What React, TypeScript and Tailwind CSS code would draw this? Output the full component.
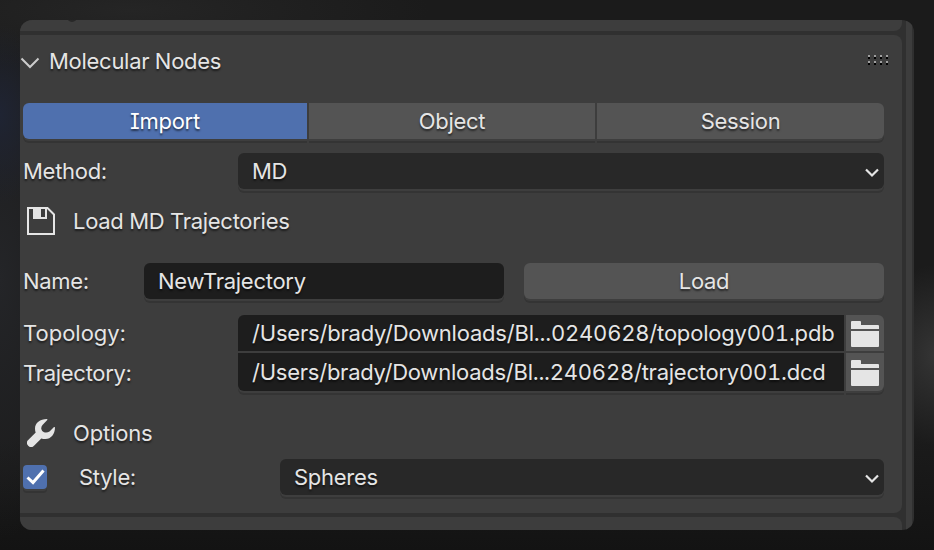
import React from "react";

const emboss = "shadow-[0_2px_0_#3e3e3e,0_4px_0_#343434]";
const field = "flex items-center rounded-[6px] px-[14px]";

function Chevron() {
  return (
    <svg width="14" height="10" viewBox="0 0 14 10" className="ml-auto mt-[3px] shrink-0" fill="none" stroke="#e5e5e5" strokeWidth="2.2">
      <path d="M1 1.5 7 7.5 13 1.5" />
    </svg>
  );
}

function Select({ value, className }: { value: string; className: string }) {
  return (
    <div className={`${field} ${emboss} h-9 bg-[#282828] pr-[5px] ${className}`}>
      <span>{value}</span>
      <Chevron />
    </div>
  );
}

function FolderIcon() {
  return (
    <svg width="28" height="26" viewBox="0 0 28 26" fill="#e5e5e5">
      <path d="M0 8V1Q0 0 1 0H9Q10 0 10 1V4H27Q28 4 28 5V8Z" />
      <path d="M0 10H28V25Q28 26 27 26H1Q0 26 0 25Z" />
    </svg>
  );
}

function FloppyIcon() {
  return (
    <svg width="28" height="28" viewBox="0 0 28 28" className="shrink-0">
      <path d="M1 1H20.5L27 7.5V27H1Z" fill="none" stroke="#e5e5e5" strokeWidth="2" />
      <path fillRule="evenodd" d="M6 0H20V12H6ZM14 2V10H18V2Z" fill="#e5e5e5" />
    </svg>
  );
}

function WrenchIcon() {
  return (
    <svg width="28" height="28" viewBox="0 0 28 28" className="shrink-0" fill="#e5e5e5">
      <path d="M20 0C13 0 8 4 8 9.500Q8 12 8.700 13.500L1.200 21A4.100 4.100 0 0 0 7 26.800L14.300 19.400Q16 20 18.500 20C24 20 28 15 28 8.200L27 8L22.500 12.500Q20 14 17 13.200Q14.800 12.500 14.300 10Q14 7.500 15.500 6L20.500 .8Z" />
    </svg>
  );
}

export default function App() {
  return (
    <div
      className="h-[550px] w-[934px] overflow-hidden bg-[#1b1b1b] bg-[radial-gradient(ellipse_50px_90px_at_0px_115px,#1f2433,transparent),radial-gradient(ellipse_60px_90px_at_934px_355px,#343434,transparent),radial-gradient(ellipse_300px_60px_at_130px_10px,#252525,transparent),radial-gradient(ellipse_80px_260px_at_0px_280px,#242528,transparent),linear-gradient(#1b1b1b,#1b1b1b_80%,#131313)] p-5 text-[22px] leading-9 tracking-[-0.28px] text-[#e5e5e5] [font-family:Inter,sans-serif] [font-feature-settings:'tnum','cv08'] [text-shadow:0_2px_2px_rgba(0,0,0,0.55)]"
    >
      <div className="flex h-[510px] overflow-hidden rounded-xl bg-[#303030] whitespace-nowrap">
        <div className="flex w-[882px] flex-col gap-1">
          <div className="flex h-[11px] justify-start overflow-hidden rounded-br-lg bg-[#3d3d3d] pl-[47px]">
            <div className="-mt-[8px] h-[10px] w-[10px] rounded-full bg-[#282828]" />
          </div>
          <main className="flex h-[478px] flex-col rounded-r-lg bg-[#3d3d3d] pr-[18px] pl-[3px]">
            <header className="-ml-[3px] flex h-[68px] pt-[8px]">
              <svg width="20" height="12" viewBox="0 0 20 12" className="mt-[14px]" fill="none" stroke="#cccccc" strokeWidth="2">
                <path d="M1.500 1.500 10 10 18.500 1.500" />
              </svg>
              <span className="ml-[9px]">Molecular Nodes</span>
              <div className="mt-[12px] -mr-[4px] ml-auto grid h-[10px] grid-cols-4 gap-x-1 gap-y-[2px]">
                {Array.from({ length: 8 }, (_, i) => (
                  <i key={i} className="block h-1 w-[2px] bg-[linear-gradient(#a0a0a0_50%,#000_50%)]" />
                ))}
              </div>
            </header>
            <nav className="flex h-9 gap-[2px] text-center">
              <div className={`w-[284px] rounded-l-[6px] bg-[#4f70ae] text-white ${emboss}`}>Import</div>
              <div className={`w-[286px] bg-[#545454] ${emboss}`}>Object</div>
              <div className={`w-[287px] rounded-r-[6px] bg-[#545454] ${emboss}`}>Session</div>
            </nav>
            <div className="mt-[14px] flex h-9">
              <span className="w-[215px]">Method:</span>
              <Select value="MD" className="w-[646px]" />
            </div>
            <div className="mt-[14px] flex h-9 items-center gap-[18px] pl-1">
              <FloppyIcon />
              <span>Load MD Trajectories</span>
            </div>
            <div className="mt-[24px] flex h-9">
              <span className="w-[121px]">Name:</span>
              <div className={`${field} ${emboss} w-[360px] bg-[#1d1d1d]`}>NewTrajectory</div>
              <div className={`ml-5 w-[360px] rounded-[6px] bg-[#545454] text-center ${emboss}`}>Load</div>
            </div>
            <div className="mt-4 flex h-[76px]">
              <div className="flex w-[215px] flex-col gap-1">
                <span className="tracking-normal">Topology:</span>
                <span>Trajectory:</span>
              </div>
              <div className="flex w-[606px] flex-col gap-[2px]">
                <div className="h-9 rounded-tl-[6px] bg-[#1d1d1d] pl-[14px] tracking-[-0.2px]">/Users/brady/Downloads/Bl...0240628/topology001.pdb</div>
                <div className={`h-[38px] rounded-bl-[6px] bg-[#1d1d1d] pt-px pl-[14px] tracking-[-0.24px] ${emboss}`}>/Users/brady/Downloads/Bl...240628/trajectory001.dcd</div>
              </div>
              <div className="ml-[2px] flex w-[38px] flex-col gap-[2px]">
                <div className="flex h-9 justify-center rounded-tr-[6px] bg-[#545454] pt-[6px]"><FolderIcon /></div>
                <div className={`flex h-[38px] justify-center rounded-br-[6px] bg-[#545454] pt-[7px] ${emboss}`}><FolderIcon /></div>
              </div>
            </div>
            <div className="mt-[24px] flex h-9 items-center gap-[18px] pl-1">
              <WrenchIcon />
              <span className="tracking-[-0.15px]">Options</span>
            </div>
            <div className="mt-[8px] flex h-9">
              <div className={`mt-[6px] h-6 w-6 rounded-[4px] bg-[#4f70ae] ${emboss}`}>
                <svg width="24" height="24" viewBox="0 0 24 24" fill="none" stroke="#fff" strokeWidth="3">
                  <path d="M4.500 12.500 10 17.500 20.500 5.500" />
                </svg>
              </div>
              <span className="ml-8 w-[201px]">Style:</span>
              <Select value="Spheres" className="w-[604px]" />
            </div>
          </main>
          <div className="h-[13px] rounded-tr-lg bg-[#3d3d3d]" />
        </div>
        <div className="ml-1 w-[6px] bg-[#3d3d3d]" />
      </div>
    </div>
  );
}
